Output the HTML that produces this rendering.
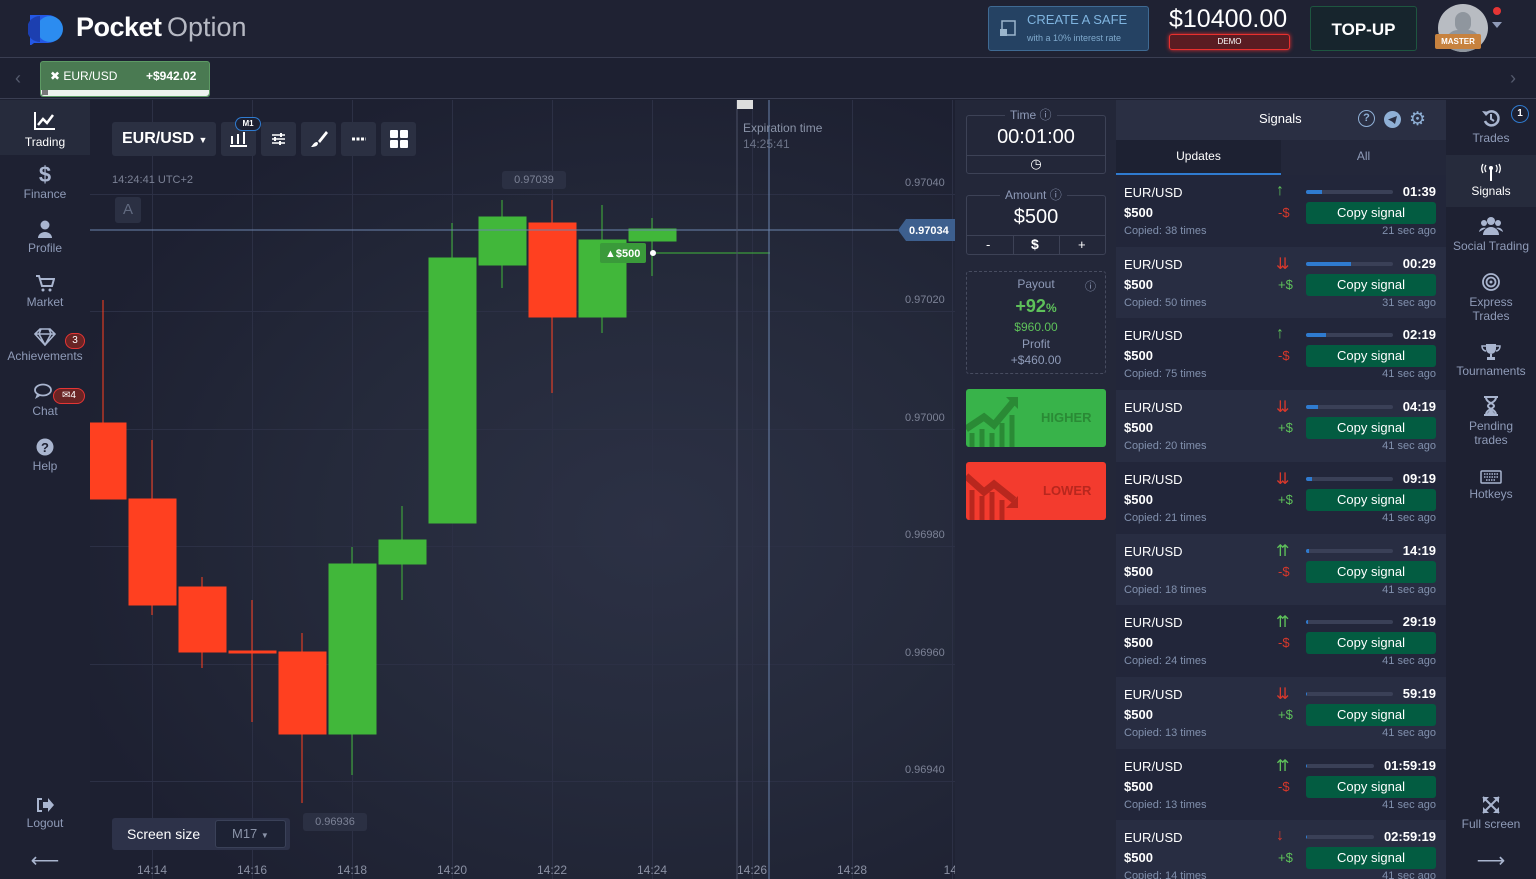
<!DOCTYPE html>
<html><head><meta charset="utf-8"><style>
*{box-sizing:border-box;margin:0;padding:0}
html,body{width:1536px;height:879px;overflow:hidden}
body{background:#1d2031;font-family:"Liberation Sans",sans-serif;color:#fff;position:relative}
.a{position:absolute}
.side{color:#8f9bb8;font-size:12px;text-align:center;width:90px}
.side svg{display:block;margin:0 auto 3px}
.row{position:absolute;left:1116px;width:330px;height:72px}
.row .p{position:absolute;left:8px;top:10px;font-size:13px}
.row .m{position:absolute;left:8px;top:30px;font-size:13px;font-weight:bold}
.row .c{position:absolute;left:8px;top:50px;font-size:11px;color:#8190ad}
.row .ar{position:absolute;left:160px;top:7px;font-size:16px;font-weight:normal}
.row .d{position:absolute;left:162px;top:30px;font-size:13px}
.row .bar{position:absolute;left:190px;top:15px;width:87px;height:4px;background:#3a4057;border-radius:2px;overflow:hidden}
.row .bar i{display:block;height:4px;background:#2f7bd0}
.row .t{position:absolute;right:10px;top:9px;font-size:13px;font-weight:bold}
.row .b{position:absolute;left:190px;top:27px;width:130px;height:22px;background:#035c41;border-radius:3px;font-size:13px;text-align:center;line-height:22px}
.row .s{position:absolute;right:10px;top:50px;font-size:11px;color:#8190ad}
.tb{position:absolute;top:122px;height:34px;background:#2b3042;border-radius:3px}
.yl{position:absolute;left:905px;font-size:11px;color:#7c8296}
.xl{position:absolute;top:863px;font-size:12px;color:#8a90a3;width:40px;text-align:center}
.vg{position:absolute;top:100px;width:1px;height:779px;background:#2c3045}
.hg{position:absolute;left:90px;width:865px;height:1px;background:#2c3045}
.rs{position:absolute;left:1446px;width:90px;text-align:center;color:#8f9bb8;font-size:12px}
.rs svg{display:block;margin:0 auto 3px}
</style></head><body>
<div class="a" style="left:0;top:0;width:1536px;height:58px;background:#1f2233;border-bottom:1px solid #3a3e52"></div>
<svg class="a" style="left:28px;top:13px" width="40" height="32"><path d="M2 2h18a14 14 0 0 1 0 28H2z" fill="#2458e6"/><circle cx="22" cy="16" r="13" fill="#2c8cf0"/><path d="M12 3a13 13 0 0 0 0 26" fill="#1c3fb0"/><path d="M2 30v3l4-3z" fill="#2458e6"/></svg>
<div class="a" style="left:76px;top:12px;font-size:27px;font-weight:bold;letter-spacing:-0.5px">Pocket</div>
<div class="a" style="left:167px;top:12px;font-size:27px;color:#b6b9c3">Option</div>
<div class="a" style="left:988px;top:6px;width:161px;height:45px;border:1px solid #3f6a93;background:#254263;border-radius:3px"></div>
<svg class="a" style="left:999px;top:20px" width="18" height="18"><rect x="3" y="1" width="13" height="14" fill="none" stroke="#9bb5cc" stroke-width="1.5"/><rect x="1" y="9" width="7" height="7" fill="#9bb5cc"/></svg>
<div class="a" style="left:1027px;top:12px;font-size:13px;color:#7fb4df">CREATE A SAFE</div>
<div class="a" style="left:1027px;top:33px;font-size:9px;color:#7fa9cc">with a 10% interest rate</div>
<div class="a" style="left:1169px;top:5px;font-size:25px">$10400.00</div>
<div class="a" style="left:1169px;top:34px;width:121px;height:16px;background:#5a1c22;border:1px solid #e9302e;border-radius:3px;font-size:8px;text-align:center;line-height:14px;box-shadow:0 0 4px #e9302e">DEMO</div>
<div class="a" style="left:1310px;top:6px;width:107px;height:45px;background:#17252d;border:1px solid #1e5640;border-radius:3px;font-size:17px;font-weight:bold;text-align:center;line-height:45px">TOP-UP</div>
<div class="a" style="left:1438px;top:4px;width:50px;height:48px;border-radius:50%;background:#b8bcc2;overflow:hidden"><div style="position:absolute;left:17px;top:8px;width:16px;height:20px;border-radius:8px;background:#8f969e"></div><div style="position:absolute;left:8px;top:26px;width:34px;height:24px;border-radius:12px 12px 0 0;background:#8f969e"></div></div>
<div class="a" style="left:1435px;top:34px;width:46px;height:15px;background:#c7823f;font-size:8px;font-weight:bold;text-align:center;line-height:15px;border-radius:2px">MASTER</div>
<div class="a" style="left:1493px;top:7px;width:8px;height:8px;border-radius:50%;background:#e53535"></div>
<div class="a" style="left:1492px;top:22px;width:0;height:0;border:5px solid transparent;border-top:6px solid #8f9bb8"></div>
<div class="a" style="left:0;top:59px;width:1536px;height:40px;background:#1d2031;border-bottom:1px solid #3a3e52"></div>
<div class="a" style="left:15px;top:68px;color:#555b6e;font-size:18px">‹</div>
<div class="a" style="left:1510px;top:68px;color:#555b6e;font-size:18px">›</div>
<div class="a" style="left:40px;top:61px;width:170px;height:36px;background:#4a7a52;border:1px solid #5d9a64;border-radius:3px"></div>
<div class="a" style="left:50px;top:69px;font-size:12px">✖ EUR/USD</div>
<div class="a" style="left:146px;top:69px;font-size:12px;font-weight:bold">+$942.02</div>
<div class="a" style="left:41px;top:90px;width:168px;height:6px;background:#eef2ee;border-radius:0 0 3px 3px"></div>
<div class="a" style="left:42px;top:90px;width:6px;height:5px;background:#777"></div>
<div class="a" style="left:0;top:100px;width:90px;height:779px;background:#1e2132"></div>
<div class="a" style="left:0;top:100px;width:90px;height:55px;background:#262b3c"></div>
<div class="side a" style="top:110px;color:#fff"><svg width="24" height="22"><path d="M2 2v17h20" stroke="#fff" stroke-width="2" fill="none"/><path d="M5 15l5-6 4 4 6-8" stroke="#fff" stroke-width="2.5" fill="none"/></svg>Trading</div>
<div class="side a" style="top:163px"><div style="font-size:22px;font-weight:bold;line-height:24px;color:#a9b5cf">$</div>Finance</div>
<div class="side a" style="top:220px"><svg width="16" height="18"><circle cx="8" cy="5" r="4.5" fill="#a9b5cf"/><path d="M1 18a7 6 0 0 1 14 0z" fill="#a9b5cf"/></svg>Profile</div>
<div class="side a" style="top:274px"><svg width="20" height="18"><path d="M1 2h3l3 10h10l2-7H5" stroke="#a9b5cf" stroke-width="2" fill="none"/><circle cx="8" cy="16" r="1.5" fill="#a9b5cf"/><circle cx="15" cy="16" r="1.5" fill="#a9b5cf"/></svg>Market</div>
<div class="side a" style="top:328px"><svg width="24" height="18"><path d="M2 6l5-5h10l5 5-10 11z M2 6h20 M8 1l-2 5 6 11 6-11-2-5" stroke="#a9b5cf" stroke-width="1.6" fill="none"/></svg>Achievements</div>
<div class="a" style="left:65px;top:333px;width:20px;height:16px;border-radius:8px;background:#6a2424;border:1px solid #e53535;font-size:10px;text-align:center;line-height:14px">3</div>
<div class="side a" style="top:383px"><svg width="24" height="18"><ellipse cx="10" cy="7" rx="8" ry="5.5" stroke="#a9b5cf" stroke-width="1.8" fill="none"/><path d="M4 11l-2 5 5-3" fill="#a9b5cf"/></svg>Chat</div>
<div class="a" style="left:53px;top:388px;width:32px;height:16px;border-radius:8px;background:#6a2424;border:1px solid #e53535;font-size:10px;text-align:center;line-height:14px">✉4</div>
<div class="side a" style="top:438px"><svg width="18" height="18"><circle cx="9" cy="9" r="8.5" fill="#a9b5cf"/><text x="9" y="14" font-size="13" font-weight="bold" fill="#1e2132" text-anchor="middle" font-family="Liberation Sans">?</text></svg>Help</div>
<div class="side a" style="top:797px"><svg width="20" height="16"><path d="M7 2H3v12h4" stroke="#a9b5cf" stroke-width="2" fill="none"/><path d="M8 5h5V1l6 7-6 7v-4H8z" fill="#a9b5cf"/></svg>Logout</div>
<div class="side a" style="top:848px;font-size:20px;color:#a9b5cf">⟵</div>
<div class="a" style="left:90px;top:100px;width:865px;height:779px;background:radial-gradient(ellipse at 65% 55%,#2c3145 0%,#252a3b 40%,#1d2031 78%)"></div>
<div class="vg" style="left:152px"></div><div class="vg" style="left:252px"></div><div class="vg" style="left:352px"></div><div class="vg" style="left:452px"></div><div class="vg" style="left:552px"></div><div class="vg" style="left:652px"></div><div class="vg" style="left:752px"></div><div class="vg" style="left:852px"></div><div class="vg" style="left:952px"></div>
<div class="hg" style="top:194px"></div><div class="hg" style="top:311px"></div><div class="hg" style="top:429px"></div><div class="hg" style="top:546px"></div><div class="hg" style="top:664px"></div><div class="hg" style="top:781px"></div>
<div class="yl" style="top:177px">0.97040</div><div class="yl" style="top:294px">0.97020</div><div class="yl" style="top:412px">0.97000</div><div class="yl" style="top:529px">0.96980</div><div class="yl" style="top:647px">0.96960</div><div class="yl" style="top:764px">0.96940</div>
<div class="xl" style="left:132px">14:14</div><div class="xl" style="left:232px">14:16</div><div class="xl" style="left:332px">14:18</div><div class="xl" style="left:432px">14:20</div><div class="xl" style="left:532px">14:22</div><div class="xl" style="left:632px">14:24</div><div class="xl" style="left:732px">14:26</div><div class="xl" style="left:832px">14:28</div><div class="xl" style="left:932px">14:</div>
<svg class="a" style="left:90px;top:100px" width="865" height="779">
<g fill="#ff4020" stroke="#ff4020">
<line x1="13" y1="200" x2="13" y2="323"/><rect x="0" y="323" width="36" height="76"/>
<line x1="62" y1="340" x2="62" y2="515"/><rect x="39" y="399" width="47" height="106"/>
<line x1="112" y1="477" x2="112" y2="568"/><rect x="89" y="487" width="47" height="65"/>
<line x1="162" y1="500" x2="162" y2="622"/><rect x="139" y="551" width="47" height="2"/>
<line x1="212" y1="533" x2="212" y2="703"/><rect x="189" y="552" width="47" height="82"/>
<line x1="462" y1="100" x2="462" y2="293"/><rect x="439" y="123" width="47" height="94"/>
</g>
<g fill="#41b73a" stroke="#41b73a">
<line x1="262" y1="447" x2="262" y2="675"/><rect x="239" y="464" width="47" height="170"/>
<line x1="312" y1="406" x2="312" y2="500"/><rect x="289" y="440" width="47" height="24"/>
<line x1="362" y1="123" x2="362" y2="423"/><rect x="339" y="158" width="47" height="265"/>
<line x1="412" y1="100" x2="412" y2="188"/><rect x="389" y="117" width="47" height="48"/>
<line x1="512" y1="105" x2="512" y2="233"/><rect x="489" y="140" width="47" height="77"/>
<line x1="562" y1="118" x2="562" y2="176"/><rect x="539" y="129" width="47" height="12"/>
<line x1="562" y1="153" x2="680" y2="153" stroke-width="1"/>
</g>
<line x1="0" y1="130" x2="808" y2="130" stroke="#6b84ad" stroke-width="1"/>
<line x1="679" y1="0" x2="679" y2="779" stroke="#6b84ad"/>
<line x1="647" y1="0" x2="647" y2="779" stroke="#4b5066"/>
<rect x="647" y="0" width="16" height="9" fill="#ddd"/>
<path d="M808 130l8-11h50v22h-50z" fill="#3d5f8e"/>
<text x="819" y="134" font-size="11" font-weight="bold" fill="#fff" font-family="Liberation Sans">0.97034</text>
<rect x="510" y="143" width="46" height="20" rx="2" fill="#3a9a3a"/>
<text x="515" y="157" font-size="11" font-weight="bold" fill="#fff" font-family="Liberation Sans">▲$500</text>
<circle cx="563" cy="153" r="3" fill="#fff"/>
</svg>
<div class="a" style="left:743px;top:121px;font-size:12px;color:#8a93a8">Expiration time</div>
<div class="a" style="left:743px;top:137px;font-size:12px;color:#6d7488">14:25:41</div>
<div class="a" style="left:502px;top:171px;width:64px;height:18px;background:#2b3043;border-radius:3px;font-size:11px;color:#7c8296;text-align:center;line-height:18px">0.97039</div>
<div class="a" style="left:303px;top:813px;width:64px;height:18px;background:#2b3043;border-radius:3px;font-size:11px;color:#7c8296;text-align:center;line-height:18px">0.96936</div>
<div class="a" style="left:112px;top:174px;font-size:11px;color:#7c8296">14:24:41 UTC+2</div>
<div class="a" style="left:115px;top:197px;width:26px;height:26px;background:#2b3043;border-radius:3px;font-size:15px;color:#616a80;text-align:center;line-height:26px">A</div>
<div class="tb" style="left:112px;width:104px;font-size:16px;font-weight:bold;line-height:34px;padding-left:10px">EUR/USD <span style="font-size:9px">▼</span></div>
<div class="tb" style="left:221px;width:35px"><svg width="35" height="34"><path d="M11 14v8M17 12v10M23 10v12M9 24h17" stroke="#fff" stroke-width="2"/></svg></div>
<div class="a" style="left:235px;top:117px;width:26px;height:14px;border:1px solid #2f7bd0;border-radius:7px;background:#1d2031;font-size:8px;font-weight:bold;text-align:center;line-height:12px">M1</div>
<div class="tb" style="left:261px;width:35px"><svg width="35" height="34"><path d="M11 13h13M11 17h13M11 21h13" stroke="#fff" stroke-width="1.5"/><path d="M20 11v4M14 15v4M19 19v4" stroke="#fff" stroke-width="2"/></svg></div>
<div class="tb" style="left:301px;width:35px"><svg width="35" height="34"><path d="M25 9l-8 10 2 2 8-10z" fill="#fff"/><path d="M16 20c-3 0-4 3-6 5 4 0 7-1 7-4z" fill="#fff"/></svg></div>
<div class="tb" style="left:341px;width:35px"><svg width="35" height="34"><path d="M11 17h14" stroke="#fff" stroke-width="3" stroke-dasharray="3 1.5"/></svg></div>
<div class="tb" style="left:381px;width:35px"><svg width="35" height="34"><rect x="9" y="8" width="8" height="8" rx="1" fill="#fff"/><rect x="19" y="8" width="8" height="8" rx="1" fill="#fff"/><rect x="9" y="18" width="8" height="8" rx="1" fill="#fff"/><rect x="19" y="18" width="8" height="8" rx="1" fill="#fff"/></svg></div>
<div class="a" style="left:112px;top:818px;width:178px;height:32px;background:#2d3249;border-radius:3px"></div>
<div class="a" style="left:127px;top:826px;font-size:14px">Screen size</div>
<div class="a" style="left:215px;top:820px;width:71px;height:28px;background:#1d2234;border:1px solid #3a4158;border-radius:3px;font-size:13px;color:#8a93a8;line-height:26px;padding-left:16px">M17 <span style="font-size:8px">▼</span></div>
<div class="a" style="left:955px;top:100px;width:161px;height:779px;background:#232739"></div>
<div class="a" style="left:966px;top:115px;width:140px;height:59px;border:1px solid #3d4256;border-radius:3px"></div>
<div class="a" style="left:966px;top:155px;width:140px;height:1px;background:#3d4256"></div>
<div class="a" style="left:1005px;top:106px;padding:0 5px;background:#232739;font-size:12px;color:#8f9bb8">Time ⓘ</div>
<div class="a" style="left:966px;top:126px;width:140px;text-align:center;font-size:20px">00:01:00</div>
<div class="a" style="left:966px;top:156px;width:140px;text-align:center;font-size:13px">◷</div>
<div class="a" style="left:966px;top:195px;width:140px;height:60px;border:1px solid #3d4256;border-radius:3px"></div>
<div class="a" style="left:966px;top:235px;width:140px;height:1px;background:#3d4256"></div>
<div class="a" style="left:1013px;top:235px;width:1px;height:20px;background:#3d4256"></div>
<div class="a" style="left:1059px;top:235px;width:1px;height:20px;background:#3d4256"></div>
<div class="a" style="left:1000px;top:186px;padding:0 5px;background:#232739;font-size:12px;color:#8f9bb8">Amount ⓘ</div>
<div class="a" style="left:966px;top:206px;width:140px;text-align:center;font-size:20px">$500</div>
<div class="a" style="left:986px;top:237px;font-size:13px">-</div>
<div class="a" style="left:1031px;top:236px;font-size:14px;font-weight:bold">$</div>
<div class="a" style="left:1078px;top:237px;font-size:13px">+</div>
<div class="a" style="left:966px;top:271px;width:140px;height:103px;border:1px dashed #474c60;border-radius:3px"></div>
<div class="a" style="left:966px;top:277px;width:140px;text-align:center;font-size:12px;color:#8f9bb8">Payout</div>
<div class="a" style="left:1085px;top:278px;font-size:11px;color:#8f9bb8">ⓘ</div>
<div class="a" style="left:966px;top:296px;width:140px;text-align:center;font-size:18px;font-weight:bold;color:#5ec15a">+92<span style="font-size:12px">%</span></div>
<div class="a" style="left:966px;top:320px;width:140px;text-align:center;font-size:12px;color:#5ec15a">$960.00</div>
<div class="a" style="left:966px;top:337px;width:140px;text-align:center;font-size:12px;color:#8f9bb8">Profit</div>
<div class="a" style="left:966px;top:353px;width:140px;text-align:center;font-size:12px;color:#8f9bb8">+$460.00</div>
<div class="a" style="left:966px;top:389px;width:140px;height:58px;background:#38b34a;border-radius:3px;overflow:hidden"><svg width="60" height="58" style="position:absolute;left:0;top:0"><path d="M0 40l18-12 10 8 20-24" stroke="#2a8a35" stroke-width="7" fill="none"/><path d="M40 8h12v12z" fill="#2a8a35"/><path d="M6 44v14M16 40v18M26 44v14M36 34v24M46 26v32" stroke="#2a8a35" stroke-width="5"/></svg><div style="position:absolute;left:75px;top:21px;font-size:13px;font-weight:bold;color:#2a8a35">HIGHER</div></div>
<div class="a" style="left:966px;top:462px;width:140px;height:58px;background:#f33b2e;border-radius:3px;overflow:hidden"><svg width="60" height="58" style="position:absolute;left:0;top:0"><path d="M0 14l18 16 10-8 20 16" stroke="#b8271e" stroke-width="7" fill="none"/><path d="M40 46h12V34z" fill="#b8271e"/><path d="M6 28v30M16 34v24M26 30v28M36 38v20" stroke="#b8271e" stroke-width="5"/></svg><div style="position:absolute;left:77px;top:21px;font-size:13px;font-weight:bold;color:#b8271e">LOWER</div></div>
<div class="a" style="left:1116px;top:100px;width:330px;height:779px;background:#23273a"></div>
<div class="a" style="left:1116px;top:100px;width:330px;height:40px;background:#2a2f43"></div>
<div class="a" style="left:1259px;top:111px;font-size:13px">Signals</div>
<div class="a" style="left:1358px;top:110px;width:17px;height:17px;border:1.5px solid #8fb0d6;border-radius:50%;font-size:11px;color:#8fb0d6;text-align:center;line-height:15px;font-weight:bold">?</div>
<svg class="a" style="left:1384px;top:111px" width="17" height="17"><circle cx="8.5" cy="8.5" r="8.5" fill="#8fb0d6"/><path d="M4 8.5l9-3.5-2 8-3-2.5z" fill="#2a2f43"/></svg>
<div class="a" style="left:1409px;top:108px;font-size:19px;color:#8fb0d6">⚙</div>
<div class="a" style="left:1116px;top:140px;width:165px;height:35px;background:#1d2132;border-bottom:2px solid #2f7bd0;text-align:center;line-height:33px;font-size:12px">Updates</div>
<div class="a" style="left:1281px;top:140px;width:165px;height:35px;text-align:center;line-height:33px;font-size:12px;color:#8f9bb8">All</div>

<div class="row" style="top:175px;background:#22263a"><div class="p">EUR/USD</div><div class="m">$500</div><div class="c">Copied: 38 times</div><div class="ar" style="color:#5ec15a">↑</div><div class="d" style="color:#d9382b">-$</div><div class="bar"><i style="width:18%"></i></div><div class="t">01:39</div><div class="b">Copy signal</div><div class="s">21 sec ago</div></div>
<div class="row" style="top:247px;background:#282d42"><div class="p">EUR/USD</div><div class="m">$500</div><div class="c">Copied: 50 times</div><div class="ar" style="color:#d9382b">⇊</div><div class="d" style="color:#5ec15a">+$</div><div class="bar"><i style="width:52%"></i></div><div class="t">00:29</div><div class="b">Copy signal</div><div class="s">31 sec ago</div></div>
<div class="row" style="top:318px;background:#22263a"><div class="p">EUR/USD</div><div class="m">$500</div><div class="c">Copied: 75 times</div><div class="ar" style="color:#5ec15a">↑</div><div class="d" style="color:#d9382b">-$</div><div class="bar"><i style="width:23%"></i></div><div class="t">02:19</div><div class="b">Copy signal</div><div class="s">41 sec ago</div></div>
<div class="row" style="top:390px;background:#282d42"><div class="p">EUR/USD</div><div class="m">$500</div><div class="c">Copied: 20 times</div><div class="ar" style="color:#d9382b">⇊</div><div class="d" style="color:#5ec15a">+$</div><div class="bar"><i style="width:14%"></i></div><div class="t">04:19</div><div class="b">Copy signal</div><div class="s">41 sec ago</div></div>
<div class="row" style="top:462px;background:#22263a"><div class="p">EUR/USD</div><div class="m">$500</div><div class="c">Copied: 21 times</div><div class="ar" style="color:#d9382b">⇊</div><div class="d" style="color:#5ec15a">+$</div><div class="bar"><i style="width:7%"></i></div><div class="t">09:19</div><div class="b">Copy signal</div><div class="s">41 sec ago</div></div>
<div class="row" style="top:534px;background:#282d42"><div class="p">EUR/USD</div><div class="m">$500</div><div class="c">Copied: 18 times</div><div class="ar" style="color:#5ec15a">⇈</div><div class="d" style="color:#d9382b">-$</div><div class="bar"><i style="width:4%"></i></div><div class="t">14:19</div><div class="b">Copy signal</div><div class="s">41 sec ago</div></div>
<div class="row" style="top:605px;background:#22263a"><div class="p">EUR/USD</div><div class="m">$500</div><div class="c">Copied: 24 times</div><div class="ar" style="color:#5ec15a">⇈</div><div class="d" style="color:#d9382b">-$</div><div class="bar"><i style="width:2%"></i></div><div class="t">29:19</div><div class="b">Copy signal</div><div class="s">41 sec ago</div></div>
<div class="row" style="top:677px;background:#282d42"><div class="p">EUR/USD</div><div class="m">$500</div><div class="c">Copied: 13 times</div><div class="ar" style="color:#d9382b">⇊</div><div class="d" style="color:#5ec15a">+$</div><div class="bar"><i style="width:1%"></i></div><div class="t">59:19</div><div class="b">Copy signal</div><div class="s">41 sec ago</div></div>
<div class="row" style="top:749px;background:#22263a"><div class="p">EUR/USD</div><div class="m">$500</div><div class="c">Copied: 13 times</div><div class="ar" style="color:#5ec15a">⇈</div><div class="d" style="color:#d9382b">-$</div><div class="bar" style="width:68px"><i style="width:2%"></i></div><div class="t">01:59:19</div><div class="b">Copy signal</div><div class="s">41 sec ago</div></div>
<div class="row" style="top:820px;background:#282d42"><div class="p">EUR/USD</div><div class="m">$500</div><div class="c">Copied: 14 times</div><div class="ar" style="color:#d9382b">↓</div><div class="d" style="color:#5ec15a">+$</div><div class="bar" style="width:68px"><i style="width:2%"></i></div><div class="t">02:59:19</div><div class="b">Copy signal</div><div class="s">41 sec ago</div></div>
<div class="a" style="left:1446px;top:100px;width:90px;height:779px;background:#1e2132"></div>
<div class="a" style="left:1446px;top:155px;width:90px;height:52px;background:#262b3c"></div>
<div class="rs" style="top:108px"><svg width="20" height="20"><path d="M5 6a7 7 0 1 1-1 7" stroke="#a9b5cf" stroke-width="2.5" fill="none"/><path d="M1 3l4 5 4-4z" fill="#a9b5cf"/><path d="M10 6v5l3 2" stroke="#a9b5cf" stroke-width="2" fill="none"/></svg>Trades</div>
<div class="a" style="left:1511px;top:105px;width:18px;height:18px;border-radius:50%;border:1.5px solid #2f7bd0;background:#1d2031;font-size:10px;font-weight:bold;text-align:center;line-height:15px">1</div>
<div class="rs" style="top:163px;color:#fff"><svg width="22" height="18"><path d="M11 6v12" stroke="#fff" stroke-width="2"/><circle cx="11" cy="5" r="2" fill="#fff"/><path d="M6 2a6 6 0 0 0 0 7M16 2a6 6 0 0 1 0 7M3 1a9 9 0 0 0 0 9M19 1a9 9 0 0 1 0 9" stroke="#fff" stroke-width="1.3" fill="none"/></svg>Signals</div>
<div class="rs" style="top:216px"><svg width="24" height="20"><circle cx="12" cy="5" r="4" fill="#a9b5cf"/><circle cx="5" cy="7" r="3" fill="#a9b5cf"/><circle cx="19" cy="7" r="3" fill="#a9b5cf"/><path d="M4 19a8 8 0 0 1 16 0zM0 16a5 5 0 0 1 7-4M24 16a5 5 0 0 0-7-4" fill="#a9b5cf"/></svg>Social Trading</div>
<div class="rs" style="top:272px"><svg width="20" height="20"><circle cx="10" cy="10" r="8" stroke="#a9b5cf" stroke-width="1.8" fill="none"/><circle cx="10" cy="10" r="4.5" stroke="#a9b5cf" stroke-width="1.8" fill="none"/><circle cx="10" cy="10" r="1.5" fill="#a9b5cf"/></svg>Express<br>Trades</div>
<div class="rs" style="top:343px"><svg width="20" height="18"><path d="M5 1h10v5a5 5 0 0 1-10 0z" fill="#a9b5cf"/><path d="M5 3H1c0 4 3 5 4 5M15 3h4c0 4-3 5-4 5" stroke="#a9b5cf" stroke-width="1.5" fill="none"/><path d="M9 11h2v3h3v3H6v-3h3z" fill="#a9b5cf"/></svg>Tournaments</div>
<div class="rs" style="top:396px"><svg width="18" height="20"><path d="M2 1h14M2 19h14M4 1c0 6 8 6 8 9s-8 3-8 9M14 1c0 6-8 6-8 9s8 3 8 9" stroke="#a9b5cf" stroke-width="2" fill="none"/><path d="M5 18l4-5 4 5z" fill="#a9b5cf"/></svg>Pending<br>trades</div>
<div class="rs" style="top:470px"><svg width="22" height="14"><rect x="1" y="1" width="20" height="12" rx="1" stroke="#a9b5cf" stroke-width="1.5" fill="none"/><path d="M4 4h14M4 7h14M6 10h10" stroke="#a9b5cf" stroke-width="1.5" stroke-dasharray="1.5 1"/></svg>Hotkeys</div>
<div class="rs" style="top:796px"><svg width="18" height="18"><path d="M1 1l16 16M17 1L1 17" stroke="#a9b5cf" stroke-width="2"/><path d="M1 1h6L1 7zM17 1h-6l6 6zM1 17h6l-6-6zM17 17h-6l6-6z" fill="#a9b5cf"/></svg>Full screen</div>
<div class="rs" style="top:848px;font-size:20px;color:#a9b5cf">⟶</div>
</body></html>
